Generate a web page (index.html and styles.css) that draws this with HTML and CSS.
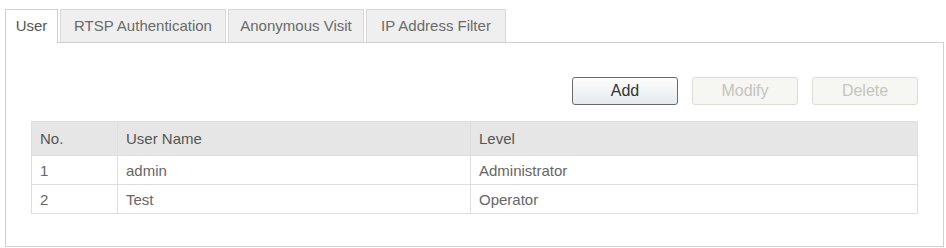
FILE: index.html
```html
<!DOCTYPE html>
<html lang="en">
<head>
    <meta charset="UTF-8">
    <title>User Management</title>
    <link rel="stylesheet" href="styles.css">
</head>
<body>
    <div class="page">
        <ul class="tabs">
            <li class="tab tab-user active">User</li>
            <li class="tab tab-rtsp">RTSP Authentication</li>
            <li class="tab tab-anon">Anonymous Visit</li>
            <li class="tab tab-ip">IP Address Filter</li>
        </ul>
        <div class="panel">
            <div class="toolbar">
                <button type="button" class="btn">Add</button>
                <button type="button" class="btn" disabled>Modify</button>
                <button type="button" class="btn" disabled>Delete</button>
            </div>
            <table class="user-table">
                <thead>
                    <tr>
                        <th class="col-no">No.</th>
                        <th class="col-name">User Name</th>
                        <th>Level</th>
                    </tr>
                </thead>
                <tbody>
                    <tr>
                        <td>1</td>
                        <td>admin</td>
                        <td>Administrator</td>
                    </tr>
                    <tr>
                        <td>2</td>
                        <td>Test</td>
                        <td>Operator</td>
                    </tr>
                </tbody>
            </table>
        </div>
    </div>
</body>
</html>
```

FILE: styles.css
```css
* {
    box-sizing: border-box;
}
body {
    margin: 0;
    font-family: "Liberation Sans", Arial, sans-serif;
    color: #555;
    background: #fff;
}
.page {
    padding: 9px 2px 0 5px;
}
.tabs {
    display: flex;
    gap: 2px;
    list-style: none;
    margin: 0;
    padding: 0;
    position: relative;
    z-index: 1;
}
.tab {
    height: 33px;
    line-height: 32px;
    padding: 0;
    text-align: center;
    font-size: 15px;
    color: #6a6a6a;
    background: #efefef;
    border: 1px solid #d8d8d8;
    border-bottom: none;
}
.tab-user { width: 53px; }
.tab-rtsp { width: 166px; }
.tab-anon { width: 136px; }
.tab-ip { width: 140px; }
.tab.active {
    background: #fff;
    color: #555;
    height: 34px;
    margin-bottom: -1px;
    border-color: #d0d0d0;
}
.panel {
    border: 1px solid #d0d0d0;
    height: 205px;
    padding: 34px 25px 0 25px;
}
.toolbar {
    display: flex;
    justify-content: flex-end;
    gap: 14px;
    margin-bottom: 16px;
}
.btn {
    width: 106px;
    height: 28px;
    font-family: "Liberation Sans", Arial, sans-serif;
    font-size: 16px;
    color: #333;
    background: linear-gradient(#fdfdfd, #e6eaee);
    border: 1px solid #6a6a6a;
    border-radius: 3px;
    padding: 0;
}
.btn:disabled {
    color: #c4c4c0;
    background: #f6f6f2;
    border-color: #dcdcd6;
}
.user-table {
    width: 100%;
    border-collapse: collapse;
    font-size: 15px;
    color: #666;
}
.user-table th,
.user-table td {
    border: 1px solid #dedede;
    text-align: left;
    font-weight: normal;
    padding: 0 8px;
}
.user-table th {
    background: #e6e6e6;
    color: #555;
    height: 34px;
}
.user-table td {
    height: 29px;
}
.col-no {
    width: 86px;
}
.col-name {
    width: 353px;
}
```
